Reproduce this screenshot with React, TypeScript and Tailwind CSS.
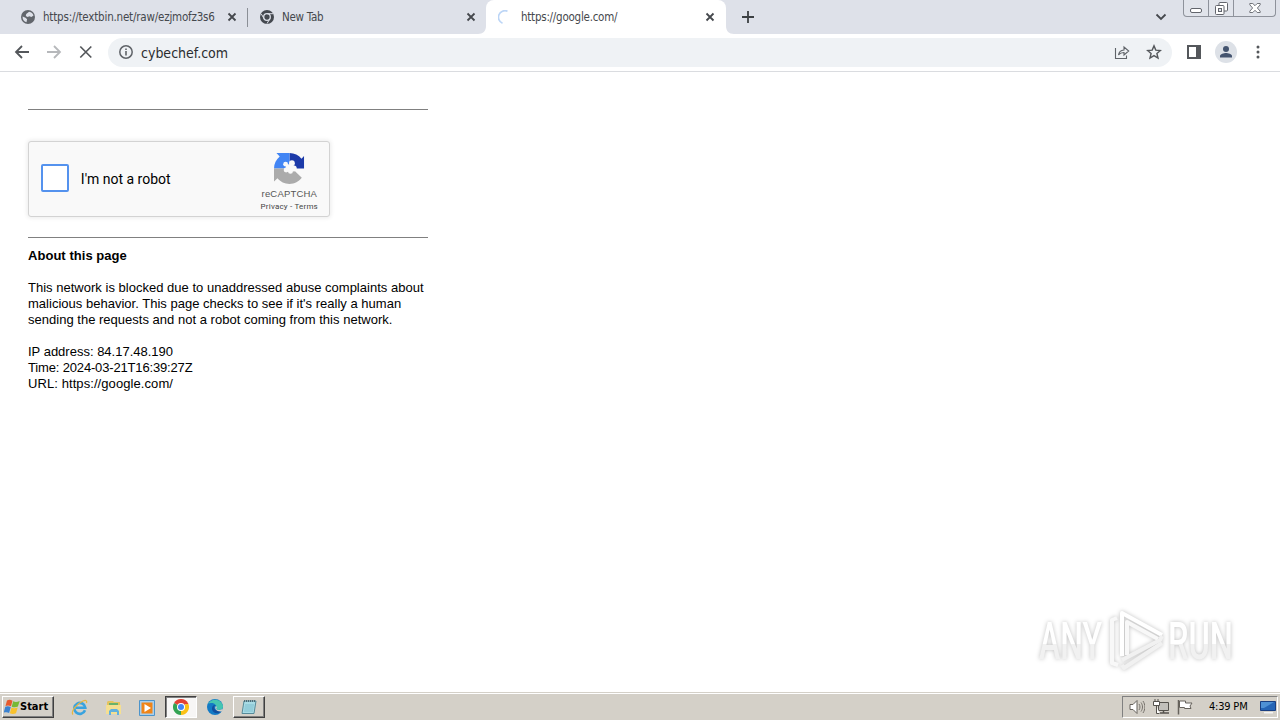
import React from "react";

const uiFont = "font-['Tahoma','DejaVu_Sans_Condensed','DejaVu_Sans',sans-serif]";

function CloseIcon() {
  return (
    <svg width="10" height="10" viewBox="0 0 10 10" className="shrink-0">
      <path d="M1.5 1.5l7 7M8.5 1.5l-7 7" stroke="#45484d" strokeWidth="1.8" />
    </svg>
  );
}

function ChromeMono() {
  return (
    <svg width="14" height="14" viewBox="0 0 14 14" className="shrink-0">
      <circle cx="7" cy="7" r="7" fill="#454950" />
      <circle cx="7" cy="7" r="3.3" fill="#454950" stroke="#dee1e9" strokeWidth="1.3" />
      <path
        d="M7 3.7h6M4.1 8.7L1.2 3.8M9.9 8.7L7 13.6"
        stroke="#dee1e9"
        strokeWidth="1"
      />
    </svg>
  );
}

function Globe() {
  return (
    <svg width="14" height="14" viewBox="0 0 14 14" className="shrink-0">
      <circle cx="7" cy="7" r="7" fill="#62666c" />
      <path
        d="M1.6 6.5l2.9 1.2 1.6 1.6-.6 3C3 11.6 1.3 9.3 1.6 6.5zM5.2 4l2.9-2.3c2.3.3 4 1.8 4.4 3.9l-2.1 1.5-2-.9-1.8.9-1.8-1.2z"
        fill="#dee1e9"
      />
    </svg>
  );
}

function TabStrip() {
  return (
    <div
      className={`flex h-[34px] items-start bg-[#dee1e9] text-[11.5px] text-[#45484d] ${uiFont}`}
    >
      <div className="flex h-[34px] w-[247px] items-center pl-[21px]">
        <Globe />
        <span className="ml-2 w-[173px] pt-[2px] whitespace-nowrap tracking-[-0.2px]">
          https://textbin.net/raw/ezjmofz3s6
        </span>
        <span className="ml-[11px]">
          <CloseIcon />
        </span>
      </div>
      <div className="mt-2 h-[19px] w-px bg-[#8b8f96]" />
      <div className="flex h-[34px] w-[238px] items-center pl-3">
        <ChromeMono />
        <span className="ml-2 w-[184px] pt-[2px] tracking-[-0.25px]">New Tab</span>
        <CloseIcon />
      </div>
      <div className="relative flex h-[34px] w-[240px] items-center rounded-t-lg bg-white pl-3">
        <svg
          width="256"
          height="8"
          viewBox="0 0 256 8"
          className="absolute bottom-0 -left-2"
        >
          <path d="M0 8c5 0 8-3 8-8v8zM256 8c-5 0-8-3-8-8v8z" fill="#fff" />
        </svg>
        <svg width="15" height="15" viewBox="0 0 15 15" className="shrink-0">
          <path
            d="M9.5 1.2A6.5 6.5 0 0 0 4.5 13.3"
            fill="none"
            stroke="#bcd5f6"
            strokeWidth="1.7"
          />
        </svg>
        <span className="ml-2 w-[184px] pt-[2px] tracking-[-0.25px]">
          https://google.com/
        </span>
        <CloseIcon />
      </div>
      <svg width="12" height="12" viewBox="0 0 12 12" className="mt-[11px] ml-4">
        <path d="M6 0v12M0 6h12" stroke="#3c4043" strokeWidth="1.8" />
      </svg>
      <svg width="12" height="8" viewBox="0 0 12 8" className="mt-[13px] ml-[401px]">
        <path
          d="M1.5 1.5L6 6l4.5-4.5"
          fill="none"
          stroke="#45484d"
          strokeWidth="1.8"
        />
      </svg>
      <WindowButtons />
    </div>
  );
}

function WindowButtons() {
  return (
    <div className="ml-4 flex h-[17px] w-[93px] rounded-b-[4px] border border-t-0 border-[#8e929b] bg-[#e1e4eb]">
      <div className="flex w-[25px] items-end justify-center border-r border-[#8e929b] pb-[3px]">
        <svg width="12" height="5" viewBox="0 0 12 5">
          <rect x=".5" y=".5" width="11" height="4" rx="1.5" fill="#fff" stroke="#62656c" />
        </svg>
      </div>
      <div className="flex w-[25px] items-start justify-center border-r border-[#8e929b] pt-[2px]">
        <svg width="13" height="13" viewBox="0 0 13 13">
          <rect x="4" y=".5" width="8.5" height="8.5" rx="1" fill="#fff" stroke="#62656c" />
          <rect x=".5" y="3.5" width="8.5" height="9" rx="1" fill="#fff" stroke="#62656c" />
          <rect x="3.5" y="6.5" width="3" height="3" fill="#e1e4eb" stroke="#62656c" />
        </svg>
      </div>
      <div className="flex flex-1 items-start justify-center pt-[3px]">
        <svg width="12" height="10" viewBox="0 0 12 10">
          <path
            d="M.8.5h3L6 2.7 8.2.5h3v1.3L8.4 5l2.8 3.2v1.3h-3L6 7.3 3.8 9.5h-3V8.2L3.6 5 .8 1.8z"
            fill="#fff"
            stroke="#62656c"
            strokeWidth=".9"
          />
        </svg>
      </div>
    </div>
  );
}

function Toolbar() {
  return (
    <div className="flex h-[38px] items-center border-b border-[#dadce0] bg-white pb-px pl-[14px]">
      <svg width="80" height="16" viewBox="0 0 80 16" className="shrink-0" fill="none">
        <path d="M15 8H2M8 2L2 8l6 6" stroke="#54575b" strokeWidth="1.8" />
        <path d="M33 8h13M40 2l6 6-6 6" stroke="#b6b8bb" strokeWidth="1.8" />
        <path d="M66.3 2.5l11 11M77.3 2.5l-11 11" stroke="#54575b" strokeWidth="1.7" />
      </svg>
      <div className="mt-px ml-[14px] flex h-[29px] w-[1064px] items-center rounded-full bg-[#eff2f5] pb-px pl-[10px]">
        <svg width="16" height="16" viewBox="0 0 16 16" className="shrink-0" fill="none">
          <circle cx="8" cy="8" r="6.2" stroke="#5f6368" strokeWidth="1.5" />
          <path d="M8 7v4.5M8 4.5v1.5" stroke="#5f6368" strokeWidth="1.6" />
        </svg>
        <span
          className={`ml-[7px] flex-1 pt-px text-[14px] leading-5 text-[#2b2d30] ${uiFont}`}
        >
          cybechef.com
        </span>
        <svg width="16" height="16" viewBox="0 0 16 16" className="mr-4" fill="none">
          <path
            d="M1.5 4v10.500h11V11.500M4.500 11c.5-3.500 2.500-4.800 5.500-5V3l4.700 4-4.700 4V8.500C7.500 8.500 6 9 4.500 11z"
            stroke="#5f6368"
            strokeWidth="1.1"
          />
        </svg>
        <svg width="16" height="16" viewBox="0 0 16 16" className="mr-[10px]" fill="none">
          <path
            d="M8 1.9l1.800 4.200 4.600.4-3.500 3 1.100 4.500L8 11.600 4 14l1.100-4.500-3.500-3 4.600-.4z"
            stroke="#54575b"
            strokeWidth="1.4"
          />
        </svg>
      </div>
      <svg width="14" height="14" viewBox="0 0 14 14" className="ml-[15px]">
        <path d="M0 0h14v14H0zM2 2v10h7V2z" fill="#54575b" fillRule="evenodd" />
      </svg>
      <svg width="22" height="22" viewBox="0 0 22 22" className="ml-[14px]">
        <circle cx="11" cy="11" r="11" fill="#dde1e7" />
        <circle cx="11" cy="8" r="3" fill="#44546f" />
        <path d="M5 16.5v-1.400c0-2 4-3 6-3s6 1 6 3v1.400z" fill="#44546f" />
      </svg>
      <svg width="4" height="14" viewBox="0 0 4 14" className="ml-[19px]">
        <circle cx="2" cy="2" r="1.5" fill="#54575b" />
        <circle cx="2" cy="7" r="1.5" fill="#54575b" />
        <circle cx="2" cy="12" r="1.5" fill="#54575b" />
      </svg>
    </div>
  );
}

function Captcha() {
  return (
    <div className="flex h-[76px] w-[302px] rounded-[3px] border border-[#d3d3d3] bg-[#f9f9f9] shadow-[0_0_4px_1px_rgba(0,0,0,0.08)]">
      <div className="mt-[22px] ml-3 size-7 rounded-[2px] border-2 border-[#5492ee] bg-white" />
      <span className="mt-[27px] ml-3 w-[180px] font-['Roboto',sans-serif] text-[14px] leading-5 text-black">
        I'm not a robot
      </span>
      <div className="-ml-[10px] flex w-[80px] flex-col items-center font-['Liberation_Sans',Arial,sans-serif] text-[#555]">
        <svg width="31" height="31" viewBox="0 0 64 64" className="mt-[11px]">
          <path
            d="M32 .1c10 0 18.900 4.500 24.800 11.700L62 6v26H32z"
            fill="#1c3aa9"
          />
          <path
            d="M32 .1H5l6.800 7.200C4.600 13.200 0 22 0 32h32z"
            fill="#4285f4"
          />
          <path
            d="M0 32v27l7.200-6.800C13 59.400 22 64 32 64c10.400 0 19.600-5 25.400-12.700L44 38l-4-6z"
            fill="#ababab"
          />
          <g fill="#f9f9f9">
            <circle cx="32" cy="31" r="8" />
            <circle cx="37" cy="21" r="6" />
            <circle cx="24" cy="23" r="5" />
            <circle cx="41" cy="32" r="6" />
            <circle cx="25" cy="35" r="5" />
            <circle cx="34" cy="38" r="5" />
          </g>
        </svg>
        <span className="mt-[4px] text-[9.5px] leading-[12px] tracking-[0.18px]">
          reCAPTCHA
        </span>
        <span className="mt-px font-['Roboto',sans-serif] text-[8px] leading-[12px] whitespace-nowrap tracking-[0.2px] text-[#444]">
          Privacy - Terms
        </span>
      </div>
    </div>
  );
}

function Watermark() {
  return (
    <svg
      width="232"
      height="76"
      viewBox="1030 602 232 76"
      className="absolute top-[530px] right-[18px] overflow-visible drop-shadow-[0_0_2px_rgba(0,0,0,0.25)]"
    >
      <defs>
        <linearGradient id="fade" x1="0" y1="0" x2="0" y2="1">
          <stop offset="0.55" stopColor="#fff" />
          <stop offset="0.55" stopColor="#f1f1f1" />
        </linearGradient>
      </defs>
      <g fill="url(#fade)" fontFamily="Roboto, sans-serif" fontSize="51" fontWeight="500">
        <text x="1039" y="659" textLength="63" lengthAdjust="spacingAndGlyphs">
          ANY
        </text>
        <text x="1168" y="659" textLength="65" lengthAdjust="spacingAndGlyphs">
          RUN
        </text>
      </g>
      <g fill="none" stroke="#fff" strokeWidth="4" strokeLinejoin="round">
        <path d="M1117 618l-5 2v43l6 2" stroke="#f8f8f8" />
        <path d="M1122 656v-43l40 22" />
        <path d="M1127 655v-33l31 17" stroke="#f8f8f8" />
        <path d="M1162 636l-2 4-38 20" stroke="#f1f1f1" />
        <path d="M1162 643l-38 25-2-3" stroke="#f1f1f1" />
      </g>
    </svg>
  );
}

function Page() {
  return (
    <div className="relative flex-1 bg-white pt-[37px] pl-7">
      <div className="w-[400px] font-['Liberation_Sans',Arial,sans-serif] text-[13px] leading-4 text-black">
        <div className="h-px bg-[#808080]" />
        <div className="pt-[31px] pb-5">
          <Captcha />
        </div>
        <div className="h-px bg-[#808080]" />
        <p className="mt-[10px] font-bold tracking-[0.04px]">About this page</p>
        <p className="mt-4 tracking-[0.015px] whitespace-nowrap">
          This network is blocked due to unaddressed abuse complaints about
          <br />
          malicious behavior. This page checks to see if it's really a human
          <br />
          sending the requests and not a robot coming from this network.
        </p>
        <p className="mt-4">
          IP address: 84.17.48.190
          <br />
          <span className="tracking-[-0.16px]">Time: 2024-03-21T16:39:27Z</span>
          <br />
          <span className="tracking-[0.08px]">URL: https://google.com/</span>
        </p>
      </div>
      <Watermark />
    </div>
  );
}

function WindowsFlag() {
  return (
    <svg width="16" height="16" viewBox="0 0 16 16" className="shrink-0">
      <path d="M3 1.500c2-1 3.500-.8 5.500.2L7 7.300C5 6.300 3.500 6.200 1.500 7z" fill="#e65a2e" />
      <path d="M9.200 2.200c2 1 3.700.9 6.500-.2l-1.800 5.600c-2 1-4.200 1-6.200.1z" fill="#77b935" />
      <path d="M1.300 7.700c2-.9 3.500-.7 5.500.3L5.100 14C3.500 13 2 12.900-.3 13.700z" fill="#3b82d0" />
      <path d="M7.500 8.500c2 1 3.900.9 6.200-.1L12 14.200c-2.200 1-4 1-6.100.1z" fill="#f8c12c" />
    </svg>
  );
}

function Taskbar() {
  return (
    <div className="flex h-7 items-start border-t border-[#d4d0c8] bg-[#d4d0c8] shadow-[inset_0_1px_0_#fff]">
      <div className="mt-[3px] ml-[2px] flex h-[22px] w-[52px] items-center border border-t-white border-r-[#404040] border-b-[#404040] border-l-white pl-px shadow-[inset_-1px_-1px_0_#808080]">
        <WindowsFlag />
        <span className="font-['Tahoma','DejaVu_Sans_Condensed',sans-serif] text-[11px] font-bold text-black">
          Start
        </span>
      </div>
      <div className="mt-[6px] ml-[17px] flex w-[94px] items-center gap-[17px]">
        <svg width="17" height="17" viewBox="0 0 17 17" className="shrink-0">
          <path
            d="M14 11.300a5.500 5.500 0 1 1 .3-2.600H5"
            fill="none"
            stroke="#39a3df"
            strokeWidth="2.600"
          />
          <path
            d="M2 15.500C-.5 13 5 5 12 2c3-1.200 4.300-.3 3.400 2"
            fill="none"
            stroke="#e9b63c"
            strokeWidth="1.200"
          />
        </svg>
        <svg width="17" height="17" viewBox="0 0 17 17" className="shrink-0">
          <path d="M2 3l1-1h5l1 1h6v10H2z" fill="#e5c35e" />
          <path d="M4 4h9v4H4z" fill="#69b26b" />
          <path d="M1 6h15v9H1z" fill="#f5df91" />
          <path d="M4 16v-4l2-2h6l2 2v4h-2v-3H6v3z" fill="#62b1de" />
        </svg>
        <svg width="16" height="16" viewBox="0 0 16 16" className="shrink-0">
          <path d="M.5.5h15v15H.5z" fill="#a9cfec" stroke="#4c94cb" />
          <path d="M2.500 2.500h11v11h-11z" fill="#f08518" />
          <path d="M5.500 4L12 8l-6.500 4z" fill="#fff" />
        </svg>
      </div>
      <div className="mt-[3px] flex h-[22px] w-[32px] items-center justify-center border border-t-[#404040] border-r-white border-b-white border-l-[#404040] bg-[#f7f6f5] shadow-[inset_1px_1px_0_#808080]">
        <svg width="16" height="16" viewBox="0 0 16 16">
          <path d="M8 8L1.070 4A8 8 0 0 1 14.930 4z" fill="#e34133" />
          <path d="M8 8L14.930 4A8 8 0 0 1 8 16z" fill="#fbc116" />
          <path d="M8 8L8 16A8 8 0 0 1 1.070 4z" fill="#34a353" />
          <path d="M8 4h6.900l.4 1H8z" fill="#e34133" />
          <circle cx="8" cy="8" r="4" fill="#fff" />
          <circle cx="8" cy="8" r="3" fill="#4285f4" />
        </svg>
      </div>
      <svg width="16" height="16" viewBox="0 0 16 16" className="mt-[6px] ml-[10px]">
        <circle cx="8" cy="8" r="8" fill="#137ac5" />
        <path d="M1 5C4-1 14-1 16 7c.4 4-5 5-7 3 2-2-1-6-4-6-2 0-3 .4-4 1z" fill="#45c5b1" />
        <path d="M9 6c-3 1-3 6 5 6.400-3 3-8 2-9-2-.4-3 1.500-5 4-4.400z" fill="#114f9f" />
        <path d="M9 7c1.500 1 .6 2 .2 3 1.500 1.500 5 1 6.500-.6V12l-2 .5C9 12.500 7 9 9 7z" fill="#d4d0c8" />
      </svg>
      <div className="mt-[3px] ml-[10px] flex h-[22px] w-[32px] items-center justify-center border border-t-white border-r-[#404040] border-b-[#404040] border-l-white shadow-[inset_-1px_-1px_0_#808080]">
        <svg width="16" height="16" viewBox="0 0 16 16">
          <path d="M3 2h12l-2 12.500H1z" fill="#a8dbe5" stroke="#568a99" />
          <path d="M4 6h9M3.600 8h9M3.300 10h9M3 12h9" stroke="#6db4c5" strokeWidth=".7" />
          <path d="M3 2h12" stroke="#4e6b76" strokeWidth="2" strokeDasharray="1 1" />
        </svg>
      </div>
      <div className="flex-1" />
      <div
        className={`mt-[3px] mr-[2px] flex h-[22px] w-[156px] items-center border border-t-[#808080] border-r-white border-b-white border-l-[#808080] pl-[6px] text-[11px] text-black ${uiFont}`}
      >
        <svg width="16" height="16" viewBox="0 0 16 16" fill="none" className="shrink-0">
          <path d="M1 5.500h3l4-4v13l-4-4H1z" fill="#fff" stroke="#66625c" />
          <path d="M10 5c1.300 2 1.300 4 0 6M12 3.500c2 3 2 6 0 9M14 2c2.500 4 2.500 8 0 12" stroke="#77736d" />
        </svg>
        <svg width="17" height="16" viewBox="0 0 17 16" fill="none" className="ml-2 shrink-0">
          <path d="M5.500 3.500h10v8h-10z" fill="#c2c0bb" stroke="#55524d" />
          <path d="M7 14h9M10.500 11.500V14" stroke="#55524d" strokeWidth="1.500" />
          <path d="M.5 2.500h6v4h-6zM2 0v2.500M5 0v2.500M3.500 6.500v8h3" fill="#fff" stroke="#55524d" />
        </svg>
        <svg width="16" height="16" viewBox="0 0 16 16" fill="none" className="ml-[7px] shrink-0">
          <path d="M1.500 1v14.500" stroke="#66625c" strokeWidth="1.500" />
          <path d="M2.500 2h6v2H15l-2 3 1 2.500H7.500v-1h-5z" fill="#fff" stroke="#66625c" />
        </svg>
        <span className="ml-4 w-[42px] whitespace-nowrap tracking-[-0.2px]">
          4:39 PM
        </span>
        <svg width="16" height="14" viewBox="0 0 16 14" className="ml-[9px] shrink-0">
          <path d="M.5 1.500h15v9H.5z" fill="#2565b6" stroke="#193f82" />
          <path d="M1 2h13L4 8H1z" fill="#4e91d5" />
          <path d="M4 12h9v1.500H4z" fill="#f3f3f3" />
        </svg>
      </div>
    </div>
  );
}

export default function App() {
  return (
    <div className="flex h-[720px] w-[1280px] flex-col overflow-hidden bg-white">
      <TabStrip />
      <Toolbar />
      <Page />
      <Taskbar />
    </div>
  );
}
